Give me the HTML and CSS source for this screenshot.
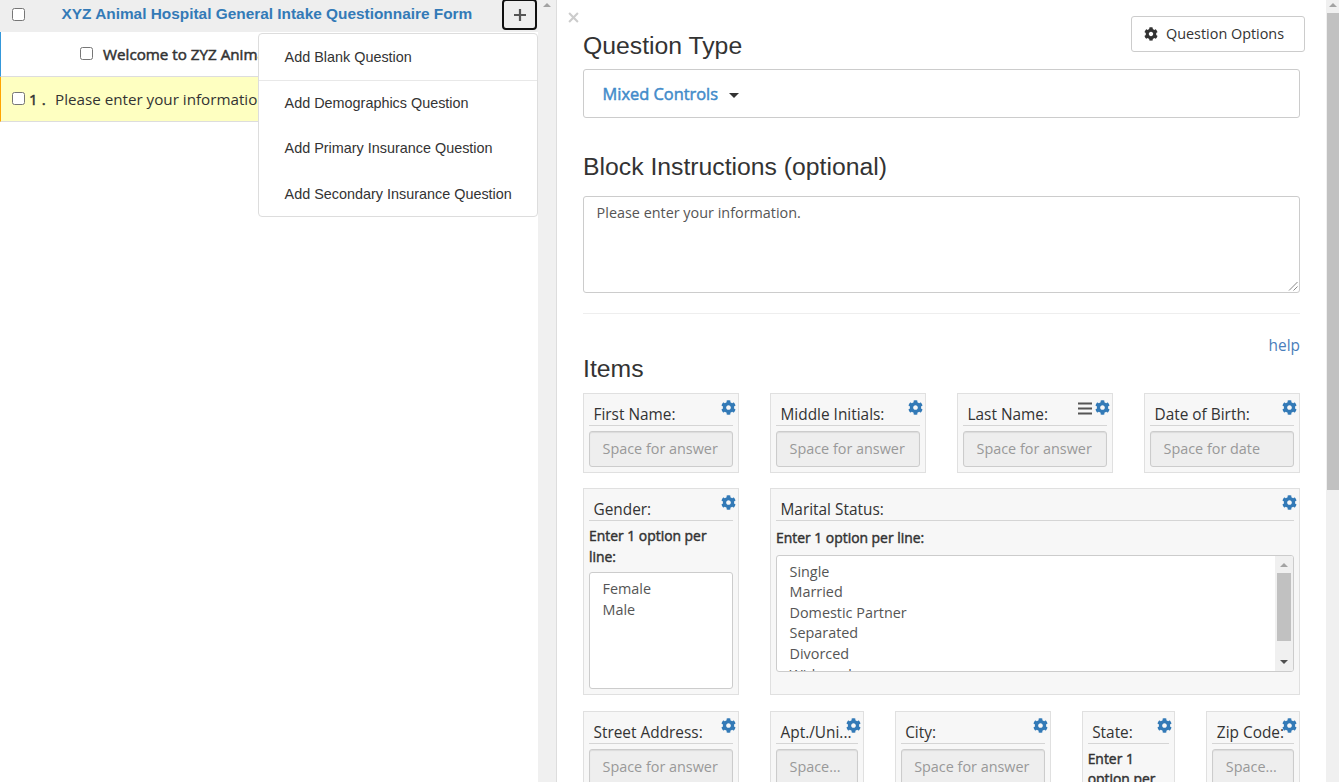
FILE: index.html
```html
<!DOCTYPE html>
<html lang="en">
<head>
<meta charset="utf-8">
<title>Questionnaire Form Editor</title>
<link rel="stylesheet" href="styles.css">
</head>
<body>
<svg class="sprite" aria-hidden="true">
  <symbol id="gear" viewBox="0 0 512 512"><path d="M487.4 315.7l-42.6-24.6c4.3-23.2 4.3-47 0-70.2l42.6-24.6c4.9-2.8 7.1-8.6 5.5-14-11.1-35.6-30-67.8-54.7-94.6-3.8-4.1-10-5.1-14.8-2.3L380.8 110c-17.9-15.4-38.5-27.3-60.8-35.1V25.8c0-5.6-3.9-10.5-9.4-11.7-36.7-8.2-74.3-7.8-109.2 0-5.5 1.2-9.4 6.1-9.4 11.7V75c-22.2 7.9-42.8 19.8-60.8 35.1L88.7 85.5c-4.9-2.8-11-1.9-14.8 2.3-24.7 26.7-43.6 58.9-54.7 94.6-1.7 5.4.6 11.2 5.5 14L67.3 221c-4.3 23.2-4.3 47 0 70.2l-42.6 24.6c-4.9 2.8-7.1 8.6-5.5 14 11.1 35.6 30 67.8 54.7 94.6 3.8 4.1 10 5.1 14.8 2.3l42.6-24.6c17.9 15.4 38.5 27.3 60.8 35.1v49.2c0 5.6 3.9 10.5 9.4 11.7 36.7 8.2 74.3 7.8 109.2 0 5.5-1.2 9.4-6.1 9.4-11.7v-49.2c22.2-7.9 42.8-19.8 60.8-35.1l42.6 24.6c4.9 2.8 11 1.9 14.8-2.3 24.7-26.7 43.6-58.9 54.7-94.6 1.5-5.5-.7-11.3-5.6-14.1zM256 336c-44.1 0-80-35.9-80-80s35.9-80 80-80 80 35.9 80 80-35.9 80-80 80z"/></symbol>
</svg>
<div class="app">
  <aside class="outline">
    <header class="row form-row">
      <span class="check"></span>
      <a class="form-title">XYZ Animal Hospital General Intake Questionnaire Form</a>
      <button class="add"><svg viewBox="0 0 14 14" width="14" height="14"><path d="M7 1v12M1 7h12"/></svg></button>
      <nav class="menu">
        <a class="first">Add Blank Question</a>
        <a>Add Demographics Question</a>
        <a>Add Primary Insurance Question</a>
        <a>Add Secondary Insurance Question</a>
      </nav>
    </header>
    <div class="row section-row"><span class="check"></span><span class="section-title">Welcome to ZYZ Animal Hospital</span></div>
    <div class="row question-row"><span class="check"></span><span class="number">1 .</span><span>Please enter your information.</span></div>
  </aside>
  <div class="scroll left-scroll"><i class="up"></i></div>
  <main class="editor">
    <div class="top">
      <h2>Question Type</h2>
      <button class="options"><svg class="gear"><use href="#gear"/></svg>Question Options</button>
      <svg class="close" viewBox="0 0 10 10"><path d="M1 1l8 8M9 1L1 9"/></svg>
    </div>
    <div class="type-box"><span>Mixed Controls</span><i class="caret"></i></div>
    <h2 class="block-heading">Block Instructions (optional)</h2>
    <div class="instructions">Please enter your information.<svg class="grip" viewBox="0 0 10 10"><path d="M1 9.5L9.5 1M5.5 9.5l4-4"/></svg></div>
    <hr>
    <a class="help">help</a>
    <h2 class="items-heading">Items</h2>
    <div class="items">
      <section class="card"><svg class="gear"><use href="#gear"/></svg><h3>First Name:</h3><div class="field">Space for answer</div></section>
      <section class="card"><svg class="gear"><use href="#gear"/></svg><h3>Middle Initials:</h3><div class="field">Space for answer</div></section>
      <section class="card"><svg class="bars" viewBox="0 0 14 13"><path d="M0 1.5h14M0 6.5h14M0 11.5h14"/></svg><svg class="gear"><use href="#gear"/></svg><h3>Last Name:</h3><div class="field">Space for answer</div></section>
      <section class="card"><svg class="gear"><use href="#gear"/></svg><h3>Date of Birth:</h3><div class="field">Space for date</div></section>

      <section class="card tall"><svg class="gear"><use href="#gear"/></svg><h3>Gender:</h3><p>Enter 1 option per line:</p><div class="list"><div class="lines">Female<br>Male</div></div></section>
      <section class="card tall wide"><svg class="gear"><use href="#gear"/></svg><h3>Marital Status:</h3><p>Enter 1 option per line:</p>
        <div class="list"><div class="lines">Single<br>Married<br>Domestic Partner<br>Separated<br>Divorced<br>Widowed</div><div class="scroll inner"><i class="up"></i><b class="thumb"></b><i class="down"></i></div></div></section>

      <section class="card"><svg class="gear"><use href="#gear"/></svg><h3>Street Address:</h3><div class="field">Space for answer</div></section>
      <section class="card narrow"><svg class="gear"><use href="#gear"/></svg><h3>Apt./Uni...</h3><div class="field">Space...</div></section>
      <section class="card"><svg class="gear"><use href="#gear"/></svg><h3>City:</h3><div class="field">Space for answer</div></section>
      <section class="card narrow"><svg class="gear"><use href="#gear"/></svg><h3>State:</h3><p>Enter 1 option per line:</p></section>
      <section class="card narrow"><svg class="gear"><use href="#gear"/></svg><h3>Zip Code:</h3><div class="field">Space...</div></section>
    </div>
  </main>
  <div class="scroll page-scroll"><i class="up"></i><b class="thumb"></b></div>
</div>
</body>
</html>
```
FILE: styles.css
```css
* { box-sizing: border-box; }
body { margin: 0; background: #fff; color: #333; font: 14.4px/20.6px "Open Sans", sans-serif; overflow: hidden; }
button { font: inherit; color: inherit; }
.sprite { position: absolute; width: 0; height: 0; }
.app { display: flex; height: 782px; overflow: hidden; }

/* Form outline */
.outline { width: 538px; flex: none; }
.row { display: flex; align-items: center; white-space: nowrap; overflow: hidden; font-size: 15.2px; }
.check { width: 13px; height: 13px; flex: none; border: 1px solid #767676; border-radius: 2.5px; background: #fff; }
.form-row { position: relative; overflow: visible; height: 32px; padding-left: 12px; padding-bottom: 2px; background: #eee; }
.form-title { margin: -2px 0 0 36.5px; color: #337ab7; font: bold 15.4px/20px "Liberation Sans", Arial, sans-serif; }
.form-row .check { margin-top: -1px; }
.add { display: flex; align-items: center; justify-content: center; width: 35px; height: 31px; margin: -1px 1px 0 auto; padding: 0; background: #eee; border: 2px solid #101010; border-radius: 4px; }
.add path { stroke: #555; stroke-width: 2.2; }
.section-row { height: 45px; padding-left: 79px; border-left: 1px solid #3498db; border-bottom: 1px solid #ddd; }
.section-title { margin: 1px 0 0 10px; -webkit-text-stroke: .5px #333; }
.section-row .check { margin-top: -2px; }
.question-row { height: 45px; padding: 1px 0 0 11px; background: #feffc1; border-left: 1px solid #ffa500; border-bottom: 1px solid #ddd; }
.question-row .check { margin-top: -3px; }
.number { width: 26px; margin-left: 4px; -webkit-text-stroke: .5px #333; }
.menu { position: absolute; z-index: 2; top: 33px; left: 258px; width: 280px; height: 184px; padding-top: 1px; background: #fff; border: 1px solid #ddd; border-radius: 4px; font: 14.4px/45.4px "Liberation Sans", Arial, sans-serif; }
.menu a { display: block; height: 45.4px; padding-left: 25.6px; }
.menu .first { height: 46px; border-bottom: 1px solid #e8e8e8; }

/* Scroll bars */
.scroll { display: flex; flex-direction: column; align-items: center; flex: none; background: #f0f0f0; }
.up, .down { width: 0; height: 0; border: solid transparent; border-width: 0 4px 4px; border-bottom-color: #a3a3a3; }
.down { border-width: 4px 4px 0; border-top-color: #505050; }
.thumb { background: #c1c1c1; }
.left-scroll { width: 18px; padding-top: 3px; }
.page-scroll { width: 13px; padding-top: 3px; }
.page-scroll .thumb { align-self: flex-end; width: 12px; height: 477px; margin-top: 6px; }

/* Question editor */
.editor { width: 770px; flex: 1; padding: 0 26px; border-left: 1px solid #ddd; }
h2 { margin: 0; color: #333; font: 24.75px/28px "Liberation Sans", Arial, sans-serif; }
.top { position: relative; display: flex; justify-content: space-between; height: 69px; padding-top: 32px; }
.options { display: flex; align-items: center; width: 174px; height: 36px; margin: -16px -5px 0 0; padding: 0 0 0 12px; background: #fff; border: 1px solid #ccc; border-radius: 3px; }
.options .gear { width: 14px; height: 14px; margin-right: 8px; fill: #333; }
.close { position: absolute; top: 12px; left: -15px; width: 11px; height: 11px; fill: none; stroke: #ccc; stroke-width: 1.9; }
.type-box { display: flex; align-items: center; height: 49px; padding: 2px 0 0 18.5px; border: 1px solid #ccc; border-radius: 3px; color: #428bca; font-size: 16.4px; -webkit-text-stroke: .5px #428bca; }
.caret { margin: 1px 0 0 11px; border: solid transparent; border-width: 5px 5px 0; border-top-color: #333; }
.block-heading { padding: 35px 0 15px; }
.instructions { position: relative; height: 97px; padding: 6px 12.6px; border: 1px solid #ccc; border-radius: 3px; color: #555; }
.grip { position: absolute; right: 1px; bottom: 1px; width: 10px; height: 10px; fill: none; stroke: #888; }
hr { margin: 20px 0; border: 0; border-top: 1px solid #eee; }
.help { display: block; height: 21px; font-size: 15.4px; line-height: 23px; text-align: right; color: #4a7ebb; }
.items-heading { padding-bottom: 10px; }
.items { display: grid; grid-template-columns: repeat(12, minmax(0, 1fr)); gap: 15.5px 31px; }

/* Item cards */
.card { position: relative; grid-column: span 3; height: 79.5px; padding: 7px 5px 0; background: #f7f7f7; border: 1px solid #e0e0e0; }
.wide { grid-column: span 9; }
.narrow { grid-column: span 2; }
.tall { height: 207px; }
.card .gear { position: absolute; top: 6px; right: 2px; width: 15px; height: 15px; fill: #337ab7; }
.bars { position: absolute; top: 8px; right: 20px; width: 14px; height: 13px; stroke: #555; stroke-width: 2; }
h3 { height: 25px; margin: 0; padding: 3px 0 0 4.5px; border-bottom: 1px solid #d5d5d5; font: 15.4px/22px "Open Sans", sans-serif; white-space: nowrap; }
.field { height: 36px; margin-top: 5px; padding-left: 12.5px; background: #eee; border: 1px solid #ccc; border-radius: 3px; box-shadow: inset 0 1px 1px rgba(0,0,0,.08); color: #999; line-height: 34px; white-space: nowrap; overflow: hidden; }
.card p { margin: 5px 0; color: #333; font-size: 13.9px; -webkit-text-stroke: .45px #333; }
.wide p { margin: 7px 0 6px; }
.list { display: flex; height: 117px; border: 1px solid #ccc; border-radius: 3px; background: #fff; overflow: hidden; color: #555; }
.lines { flex: 1; height: 115px; padding: 6px 12.5px; }
.inner { width: 18px; padding: 7px 0; }
.inner .thumb { width: 14px; height: 68px; margin-top: 6px; }
.inner .down { margin-top: auto; }
```
